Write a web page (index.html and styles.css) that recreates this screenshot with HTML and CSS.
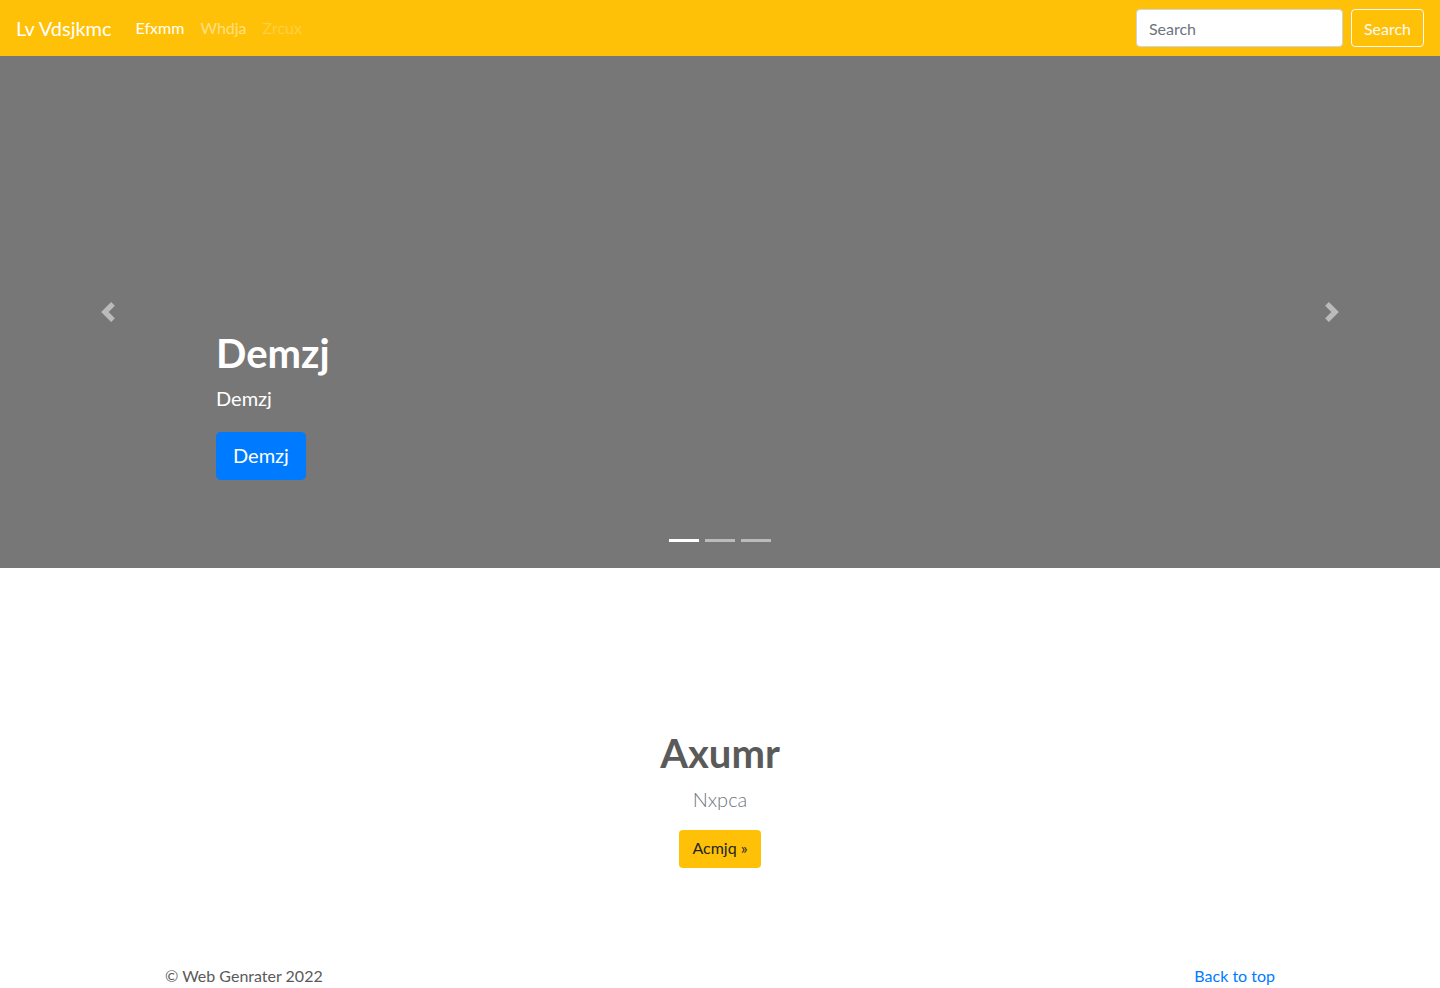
FILE: index.html
```html
<!DOCTYPE html>
<html lang="en">
<head>
<meta charset="utf-8">
<title>Lv Vdsjkmc</title>
<link rel="stylesheet" href="styles.css">
</head>
<body>
<header class="navbar">
  <a class="brand" href="#">Lv Vdsjkmc</a>
  <nav class="nav">
    <a class="nav-link active" href="#">Efxmm</a>
    <a class="nav-link" href="#">Whdja</a>
    <a class="nav-link disabled" href="#">Zrcux</a>
  </nav>
  <form class="search">
    <input class="search-input" type="text" placeholder="Search">
    <button class="btn-outline" type="button">Search</button>
  </form>
</header>

<section class="carousel">
  <div class="slide">
    <div class="caption">
      <h1 class="caption-title">Demzj</h1>
      <p class="caption-text">Demzj</p>
      <a class="btn-primary" href="#">Demzj</a>
    </div>
  </div>
  <a class="control control-prev" href="#">
    <svg width="20" height="20" viewBox="0 0 8 8"><path fill="#fff" d="M5.25 0l-4 4 4 4 1.5-1.5L4.25 4l2.5-2.5L5.25 0z"/></svg>
  </a>
  <a class="control control-next" href="#">
    <svg width="20" height="20" viewBox="0 0 8 8"><path fill="#fff" d="M2.75 0l-1.5 1.5L3.75 4l-2.5 2.5L2.75 8l4-4-4-4z"/></svg>
  </a>
  <ol class="indicators">
    <li class="indicator active"></li>
    <li class="indicator"></li>
    <li class="indicator"></li>
  </ol>
</section>

<main class="feature">
  <h1 class="feature-title">Axumr</h1>
  <p class="feature-lead">Nxpca</p>
  <a class="btn-warning" href="#">Acmjq &raquo;</a>
</main>

<footer class="footer">
  <p class="copy">&copy; Web Genrater 2022</p>
  <a class="top-link" href="#">Back to top</a>
</footer>
</body>
</html>
```

FILE: styles.css
```css
* { box-sizing: border-box; }
html, body { margin: 0; padding: 0; }
body {
  font-family: Lato, "Noto Sans", sans-serif;
  font-size: 16px;
  line-height: 1.5;
  color: #5a5a5a;
  background: #fff;
}
a { text-decoration: none; }

.navbar {
  height: 56px;
  background: #ffc107;
  display: flex;
  align-items: center;
  padding: 0 16px;
}
.brand {
  color: #fff;
  font-size: 20px;
  line-height: 30px;
  margin-right: 16px;
}
.nav { display: flex; flex: 1; }
.nav-link {
  padding: 8px 8px;
  color: rgba(255,255,255,.5);
  font-size: 16px;
}
.nav-link.active { color: #fff; }
.nav-link.disabled { color: rgba(255,255,255,.25); }

.search { display: flex; align-items: center; }
.search-input {
  width: 207px;
  height: 38px;
  padding: 6px 12px;
  border: 1px solid #ced4da;
  border-radius: 4px;
  font-family: inherit;
  font-size: 16px;
  color: #495057;
  background: #fff;
  margin-right: 8px;
}
.search-input::placeholder { color: #6c757d; }
.btn-outline {
  height: 38px;
  padding: 6px 12px;
  border: 1px solid #f8f9fa;
  border-radius: 4px;
  background: transparent;
  color: #f8f9fa;
  font-family: inherit;
  font-size: 16px;
}

.carousel {
  position: relative;
  height: 512px;
  background: #777;
}
.slide {
  height: 100%;
  display: flex;
  flex-direction: column;
  justify-content: flex-end;
  padding: 0 15% 88px 15%;
}
.caption { color: #fff; }
.caption-title {
  margin: 0 0 9px;
  font-size: 40px;
  font-weight: 700;
  line-height: 48px;
}
.caption-text {
  margin: 0 0 22px;
  font-size: 20px;
  line-height: 24px;
}
.btn-primary {
  display: inline-block;
  height: 48px;
  padding: 8px 17px;
  background: #007bff;
  color: #fff;
  font-size: 20px;
  line-height: 30px;
  border-radius: 4.8px;
}
.control {
  position: absolute;
  top: 0;
  bottom: 0;
  width: 15%;
  display: flex;
  align-items: center;
  justify-content: center;
  opacity: .5;
}
.control-prev { left: 0; }
.control-next { right: 0; }
.indicators {
  position: absolute;
  left: 0;
  right: 0;
  bottom: 26px;
  margin: 0;
  padding: 0;
  list-style: none;
  display: flex;
  justify-content: center;
  gap: 6px;
}
.indicator {
  width: 30px;
  height: 3px;
  background: #fff;
  opacity: .5;
}
.indicator.active { opacity: 1; }

.feature {
  text-align: center;
  padding: 161px 0 0;
}
.feature-title {
  margin: 0 0 7px;
  font-size: 40px;
  font-weight: 700;
  line-height: 48px;
  color: #5a5a5a;
}
.feature-lead {
  margin: 0 0 16px;
  font-size: 20px;
  font-weight: 300;
  line-height: 30px;
  color: #6c757d;
}
.btn-warning {
  display: inline-block;
  height: 38px;
  padding: 6px 13px;
  background: #ffc107;
  color: #212529;
  font-size: 16px;
  line-height: 24px;
  border-radius: 4px;
}

.footer {
  width: 1140px;
  margin: 96px auto 0;
  padding: 0 15px;
  display: flex;
  justify-content: space-between;
}
.copy { margin: 0; }
.top-link { color: #007bff; }
```
